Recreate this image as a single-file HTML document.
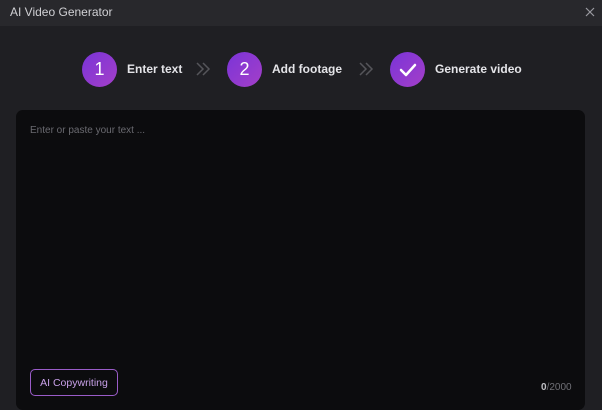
<!DOCTYPE html>
<html><head><style>
body{margin:0;width:602px;height:410px;background:#1f1f23;font-family:"Liberation Sans",sans-serif;overflow:hidden;position:relative}
.title{position:absolute;left:0;top:0;width:602px;height:26px;background:#28282c}
.title span{position:absolute;left:10px;top:5px;font-size:12px;color:#d0d0d4}
.x{position:absolute;right:7px;top:7px}
.c{position:absolute;width:35px;height:35px;border-radius:50%;background:linear-gradient(135deg,#7a34d8,#a43fc8);color:#fff;font-size:18px;text-align:center;line-height:35px}
.l{position:absolute;top:62px;font-size:12px;font-weight:bold;color:#e4e4e8}
.a{position:absolute;top:62px}
.p{position:absolute;left:16px;top:110px;width:569px;height:300px;background:#0c0c0e;border-radius:7px}
.ph{position:absolute;left:30px;top:125px;font-size:10px;color:#6a6a70}
.b{position:absolute;left:30px;top:369px;width:86px;height:25px;border:1.5px solid #9a5cc8;border-radius:5px;color:#c8a0e8;font-size:10.5px;text-align:center;line-height:26px}
.n{position:absolute;left:541px;top:382px;font-size:10px;color:#707076}
</style></head><body>
<div class="title"><span>AI Video Generator</span><svg class="x" width="10" height="10"><path d="M1 1l8 8M9 1l-8 8" stroke="#9a9aa0" stroke-width="1.2"/></svg></div>
<div class="c" style="left:82px;top:52px">1</div><div class="l" style="left:127px">Enter text</div>
<svg class="a" style="left:196px" width="15" height="14"><path d="M1 1l6 6-6 6M7 1l6 6-6 6" stroke="#55555a" stroke-width="1.5" fill="none"/></svg>
<div class="c" style="left:227px;top:52px">2</div><div class="l" style="left:272px">Add footage</div>
<svg class="a" style="left:359px" width="15" height="14"><path d="M1 1l6 6-6 6M7 1l6 6-6 6" stroke="#55555a" stroke-width="1.5" fill="none"/></svg>
<div class="c" style="left:390px;top:52px"><svg width="35" height="35"><path d="M11 18l5 5 9-10" stroke="#fff" stroke-width="2.5" fill="none" stroke-linecap="round" stroke-linejoin="round"/></svg></div>
<div class="l" style="left:435px">Generate video</div>
<div class="p"></div>
<div class="ph">Enter or paste your text ...</div>
<div class="b">AI Copywriting</div>
<div class="n"><b style="color:#c0c0c4">0</b>/2000</div>
</body></html>
